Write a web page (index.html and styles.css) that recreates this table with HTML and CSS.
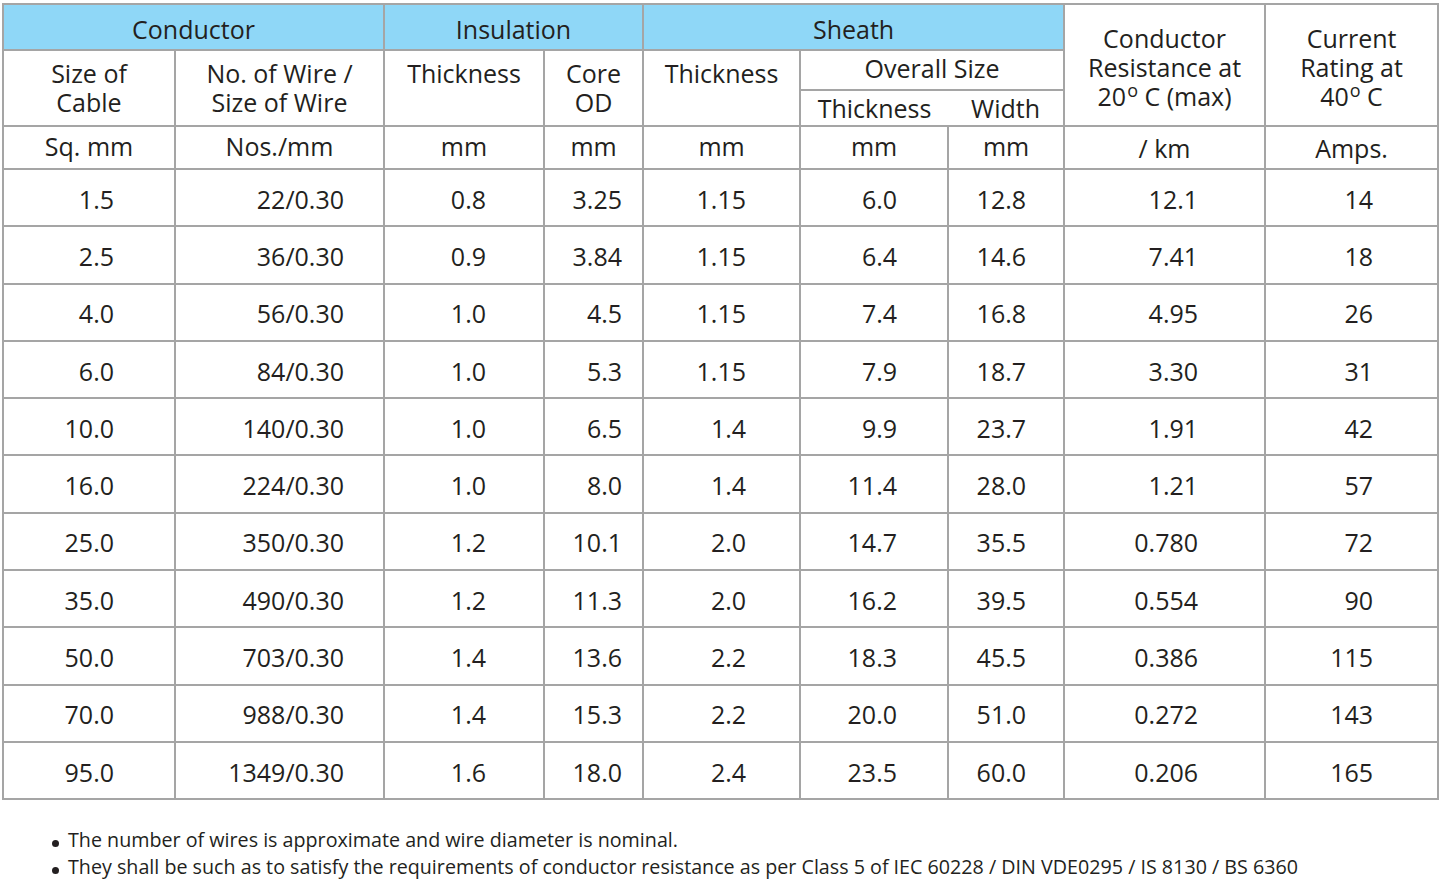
FILE: index.html
```html
<!DOCTYPE html>
<html lang="en">
<head>
<meta charset="utf-8">
<title>Cable Specification</title>
<link rel="stylesheet" href="styles.css">
</head>
<body>
<table class="spec">
  <colgroup>
    <col class="c1"><col class="c2"><col class="c3"><col class="c4"><col class="c5"><col class="c6"><col class="c7"><col class="c8"><col class="c9">
  </colgroup>
  <thead>
    <tr class="r1">
      <th colspan="2" class="grp">Conductor</th>
      <th colspan="2" class="grp">Insulation</th>
      <th colspan="3" class="grp">Sheath</th>
      <th rowspan="3" class="tall">Conductor<br>Resistance at<br>20<sup>o</sup> C (max)</th>
      <th rowspan="3" class="tall">Current<br>Rating at<br>40<sup>o</sup> C</th>
    </tr>
    <tr class="r2a">
      <th rowspan="2" class="sub">Size of<br>Cable</th>
      <th rowspan="2" class="sub">No. of Wire /<br>Size of Wire</th>
      <th rowspan="2" class="sub">Thickness</th>
      <th rowspan="2" class="sub">Core<br>OD</th>
      <th rowspan="2" class="sub">Thickness</th>
      <th colspan="2" class="overall">Overall Size</th>
    </tr>
    <tr class="r2b">
      <th class="nr">Thickness</th>
      <th class="nl">Width</th>
    </tr>
    <tr class="units">
      <th>Sq. mm</th><th>Nos./mm</th><th>mm</th><th>mm</th><th>mm</th><th>mm</th><th>mm</th><th class="low">/ km</th><th class="low">Amps.</th>
    </tr>
  </thead>
  <tbody>
    <tr><td>1.5</td><td>22/0.30</td><td>0.8</td><td>3.25</td><td>1.15</td><td>6.0</td><td>12.8</td><td>12.1</td><td>14</td></tr>
    <tr><td>2.5</td><td>36/0.30</td><td>0.9</td><td>3.84</td><td>1.15</td><td>6.4</td><td>14.6</td><td>7.41</td><td>18</td></tr>
    <tr><td>4.0</td><td>56/0.30</td><td>1.0</td><td>4.5</td><td>1.15</td><td>7.4</td><td>16.8</td><td>4.95</td><td>26</td></tr>
    <tr><td>6.0</td><td>84/0.30</td><td>1.0</td><td>5.3</td><td>1.15</td><td>7.9</td><td>18.7</td><td>3.30</td><td>31</td></tr>
    <tr><td>10.0</td><td>140/0.30</td><td>1.0</td><td>6.5</td><td>1.4</td><td>9.9</td><td>23.7</td><td>1.91</td><td>42</td></tr>
    <tr><td>16.0</td><td>224/0.30</td><td>1.0</td><td>8.0</td><td>1.4</td><td>11.4</td><td>28.0</td><td>1.21</td><td>57</td></tr>
    <tr><td>25.0</td><td>350/0.30</td><td>1.2</td><td>10.1</td><td>2.0</td><td>14.7</td><td>35.5</td><td>0.780</td><td>72</td></tr>
    <tr><td>35.0</td><td>490/0.30</td><td>1.2</td><td>11.3</td><td>2.0</td><td>16.2</td><td>39.5</td><td>0.554</td><td>90</td></tr>
    <tr><td>50.0</td><td>703/0.30</td><td>1.4</td><td>13.6</td><td>2.2</td><td>18.3</td><td>45.5</td><td>0.386</td><td>115</td></tr>
    <tr><td>70.0</td><td>988/0.30</td><td>1.4</td><td>15.3</td><td>2.2</td><td>20.0</td><td>51.0</td><td>0.272</td><td>143</td></tr>
    <tr><td>95.0</td><td>1349/0.30</td><td>1.6</td><td>18.0</td><td>2.4</td><td>23.5</td><td>60.0</td><td>0.206</td><td>165</td></tr>
  </tbody>
</table>
<ul class="notes">
  <li>The number of wires is approximate and wire diameter is nominal.</li>
  <li>They shall be such as to satisfy the requirements of conductor resistance as per Class 5 of IEC 60228 / DIN VDE0295 / IS 8130 / BS 6360</li>
</ul>
</body>
</html>
```
FILE: styles.css
```css
html, body {
  margin: 0;
  padding: 0;
  background: #ffffff;
}

body {
  font-family: "Open Sans", "Liberation Sans", sans-serif;
  color: #231f20;
}

.spec {
  border-collapse: collapse;
  table-layout: fixed;
  width: 1435px;
  margin: 3px 0 0 2px;
  font-size: 25px;
}

.c1 { width: 172px; }
.c2 { width: 209px; }
.c3 { width: 160px; }
.c4 { width: 99px; }
.c5 { width: 157px; }
.c6 { width: 148px; }
.c7 { width: 116px; }
.c8 { width: 201px; }
.c9 { width: 173px; }

.spec th,
.spec td {
  border: 2px solid #a5a5a5;
  padding: 0;
  font-weight: normal;
  line-height: 29px;
  white-space: nowrap;
}

.spec th {
  text-align: center;
}

.r1 { height: 46px; }
.r2a { height: 40px; }
.r2b { height: 36px; }
.units { height: 43px; }
.spec tbody tr { height: 57.3px; }

.spec .grp {
  background: #8fd7f7;
  vertical-align: middle;
  padding-top: 4px;
}

.spec .tall {
  vertical-align: top;
  padding-top: 19px;
}

.spec .tall sup {
  font-size: 0.72em;
  line-height: 0;
  vertical-align: 0.5em;
  margin-left: 1px;
}

.spec .sub {
  vertical-align: top;
  padding-top: 8px;
}

.spec .overall {
  vertical-align: middle;
  padding-bottom: 4px;
}

.spec .r2b th { vertical-align: middle; }
.spec .r2b .nr { border-right: none; }
.spec .r2b .nl { border-left: none; }

.spec .units th {
  vertical-align: middle;
  padding-bottom: 3px;
}
.spec .units .low {
  padding-bottom: 0;
  padding-top: 1px;
}

.spec td {
  text-align: right;
  vertical-align: middle;
  padding-top: 3px;
}

.spec td:nth-child(1) { padding-right: 60px; }
.spec td:nth-child(2) { padding-right: 39px; }
.spec td:nth-child(3) { padding-right: 57px; }
.spec td:nth-child(4) { padding-right: 20px; }
.spec td:nth-child(5) { padding-right: 53px; }
.spec td:nth-child(6) { padding-right: 50px; }
.spec td:nth-child(7) { padding-right: 37px; }
.spec td:nth-child(8) { padding-right: 66px; }
.spec td:nth-child(9) { padding-right: 64px; }

.notes {
  list-style: none;
  margin: 26px 0 0 0;
  padding: 0 0 0 68px;
  font-size: 19.7px;
  line-height: 27px;
}

.notes li {
  position: relative;
  white-space: nowrap;
}

.notes li::before {
  content: "";
  position: absolute;
  left: -16px;
  top: 14px;
  width: 7px;
  height: 7px;
  border-radius: 50%;
  background: #231f20;
}
```
